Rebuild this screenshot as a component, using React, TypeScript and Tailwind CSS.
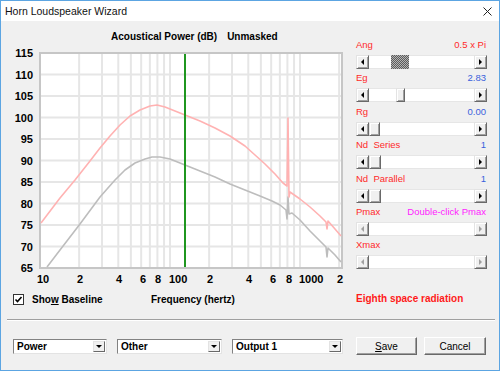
import React from "react";

const X = (f: number) => 40 + 130 * Math.log10(f / 10);
const Y = (db: number) => 53 + (115 - db) * 4.3;

const V_GRID = [20, 30, 40, 50, 60, 70, 80, 90, 100, 200, 300, 400, 500, 600, 700, 800, 900, 1000, 2000];
const H_GRID = [70, 75, 80, 85, 90, 95, 100, 105, 110];
const Y_LABELS = [115, 110, 105, 100, 95, 90, 85, 80, 75, 70, 65];

const X_LABELS = [
  { t: "10", x: 37, anchor: "start" },
  { t: "2", x: 80, anchor: "middle" },
  { t: "4", x: 119, anchor: "middle" },
  { t: "6", x: 143, anchor: "middle" },
  { t: "8", x: 158, anchor: "middle" },
  { t: "100", x: 169, anchor: "start" },
  { t: "2", x: 210, anchor: "middle" },
  { t: "4", x: 249, anchor: "middle" },
  { t: "6", x: 273, anchor: "middle" },
  { t: "8", x: 289, anchor: "middle" },
  { t: "1000", x: 299, anchor: "start" },
  { t: "2", x: 340, anchor: "middle" },
];

const PINK =
  "41,223 60,198 75,180 90,161 100,148 110,136 120,125 130,116 140,110 150,106 157,105 165,107 175,111 185,115 200,121 215,128 230,136 245,146 255,155 265,164 275,174 283,183 287,186 288,118 289,197 290,192 300,199 310,207 320,216 326,222 327,229 328,221 335,229 341,236";
const GRAY =
  "47,267 60,250 80,224 100,197 115,180 125,170 135,163 145,159 152,157 160,157 170,159 185,165 200,171 215,177 230,184 245,190 260,196 272,201 280,205 286,210 287,219 288,197 289,214 292,213 300,220 310,231 320,241 326,247 327,257 328,248 335,255 341,262";

const SLIDERS = [
  { label: "Ang", value: "0.5 x Pi", valueColor: "text-[#ff2a2a]", thumb: { left: 22, width: 18, dark: true } },
  { label: "Eg", value: "2.83", valueColor: "text-[#3a5fdc]", thumb: { left: 27, width: 9 } },
  { label: "Rg", value: "0.00", valueColor: "text-[#3a5fdc]", thumb: { left: 0, width: 11 } },
  { label: "Nd  Series", value: "1", valueColor: "text-[#3a5fdc]", thumb: { left: 0, width: 12 } },
  { label: "Nd  Parallel", value: "1", valueColor: "text-[#3a5fdc]", thumb: { left: 0, width: 12 } },
  { label: "Pmax", value: "Double-click Pmax", valueColor: "text-[#ff22ff]", thumb: null },
  { label: "Xmax", value: "", valueColor: "", thumb: null },
];

function ArrowBtn({ dir, disabled }: { dir: "left" | "right"; disabled?: boolean }) {
  return (
    <div className="w-[13px] h-full flex items-center justify-center bg-[#f0f0f0] border border-t-[#e3e3e3] border-l-[#e3e3e3] border-r-[#696969] border-b-[#696969] shadow-[inset_1px_1px_0_#fff,inset_-1px_-1px_0_#a0a0a0]">
      {dir === "left" ? (
        <div className={`w-0 h-0 border-y-[3px] border-y-transparent border-r-[3px] ${disabled ? "border-r-[#a0a0a0]" : "border-r-black"}`} />
      ) : (
        <div className={`w-0 h-0 border-y-[3px] border-y-transparent border-l-[3px] ${disabled ? "border-l-[#a0a0a0]" : "border-l-black"}`} />
      )}
    </div>
  );
}

function ScrollBar({ thumb }: { thumb: { left: number; width: number; dark?: boolean } | null }) {
  const disabled = !thumb;
  return (
    <div className="flex h-[14px] w-[131px] mt-[4px]">
      <ArrowBtn dir="left" disabled={disabled} />
      <div className="relative flex-1 bg-white border-y border-[#e6e6e6]">
        {thumb &&
          (thumb.dark ? (
            <div
              className="absolute -top-px -bottom-px bg-[image:repeating-conic-gradient(#5c5c5c_0_25%,#b4b4b4_0_50%)] bg-[length:2px_2px]"
              style={{ left: thumb.left, width: thumb.width }}
            />
          ) : (
            <div
              className="absolute -top-px -bottom-px bg-[#f0f0f0] border border-t-[#e3e3e3] border-l-[#e3e3e3] border-r-[#696969] border-b-[#696969] shadow-[inset_1px_1px_0_#fff,inset_-1px_-1px_0_#a0a0a0]"
              style={{ left: thumb.left, width: thumb.width }}
            />
          ))}
      </div>
      <ArrowBtn dir="right" disabled={disabled} />
    </div>
  );
}

function Combo({ className, text }: { className: string; text: string }) {
  return (
    <div className={`flex h-[15px] bg-white border border-t-[#828282] border-l-[#828282] border-r-[#e3e3e3] border-b-[#e3e3e3] ${className}`}>
      <div className="flex-1 pl-[3px] text-[10px] font-bold leading-[13px] text-black">{text}</div>
      <div className="w-[12px] m-px flex items-center justify-center bg-[#f0f0f0] border border-t-[#e3e3e3] border-l-[#e3e3e3] border-r-[#696969] border-b-[#696969]">
        <div className="w-0 h-0 border-x-[3px] border-x-transparent border-t-[3px] border-t-black" />
      </div>
    </div>
  );
}

function Chart() {
  return (
    <svg width={352} height={247} className="block">
      <g transform="translate(-1,-43)">
        <rect x={40} y={53} width={302} height={215} fill="#fff" />
        {V_GRID.map(f => (
          <line key={f} x1={X(f)} x2={X(f)} y1={54} y2={267} stroke="#e6e6e6" strokeWidth={2} />
        ))}
        {H_GRID.map(d => (
          <line key={d} x1={41} x2={341} y1={Y(d)} y2={Y(d)} stroke="#e6e6e6" strokeWidth={2} />
        ))}
        <rect x={40} y={53} width={302} height={215} fill="none" stroke="#c6c6c6" strokeWidth={2} />
        <polyline points={GRAY} fill="none" stroke="#bdbdbd" strokeWidth={1.6} strokeLinejoin="round" />
        <polyline points={PINK} fill="none" stroke="#ffb2b2" strokeWidth={1.6} strokeLinejoin="round" />
        <line x1={185} x2={185} y1={54} y2={267} stroke="#1f961f" strokeWidth={2} />
        {Y_LABELS.map(d => (
          <text key={d} x={33} y={Y(d) + 4} textAnchor="end" fontSize={11} fontWeight="bold" fill="#000">
            {d}
          </text>
        ))}
        {X_LABELS.map((l, i) => (
          <text key={i} x={l.x} y={283} textAnchor={l.anchor as "start" | "middle"} fontSize={11} fontWeight="bold" fill="#000">
            {l.t}
          </text>
        ))}
      </g>
    </svg>
  );
}

export default function App() {
  return (
    <div className="w-[500px] h-[371px] bg-[#f0f0f0] border border-[#5ca5e2] flex flex-col overflow-hidden font-['Liberation_Sans',Arial,sans-serif] text-black">
      {/* title bar */}
      <div className="h-[20px] bg-white flex items-center justify-between pl-[4px] pr-[7px]">
        <span className="text-[10.5px] leading-none text-[#111]">Horn Loudspeaker Wizard</span>
        <svg width={9} height={9} className="block">
          <path d="M0.5 0.5 L8.5 8.5 M8.5 0.5 L0.5 8.5" stroke="#222" strokeWidth={1} />
        </svg>
      </div>

      {/* main area */}
      <div className="flex h-[289px]">
        <div className="w-[352px] flex flex-col">
          <div className="mt-[10px] h-[12px] pl-[110px] flex text-[10px] font-bold leading-[12px]">
            <span>Acoustical Power (dB)</span>
            <span className="ml-[10px]">Unmasked</span>
          </div>
          <Chart />
          <div className="mt-[3px] h-[12px] pl-[12px] flex items-center text-[10px] font-bold">
            <div className="w-[11px] h-[11px] bg-white border border-[#333] flex items-center justify-center">
              <svg width={9} height={9} className="block">
                <path d="M1.5 4.5 L3.5 6.5 L7.5 2" fill="none" stroke="#000" strokeWidth={1.6} />
              </svg>
            </div>
            <span className="ml-[8px] w-[119px]">
              Sho<u>w</u> Baseline
            </span>
            <span>Frequency (hertz)</span>
          </div>
        </div>

        <div className="ml-[3px] w-[131px] pt-[18px] flex flex-col">
          <div className="flex flex-col gap-[3.4px]">
            {SLIDERS.map(s => (
              <div key={s.label} className="flex flex-col">
                <div className="h-[12px] flex justify-between items-center text-[9.5px] leading-[12px] whitespace-pre">
                  <span className="text-[#ff2a2a]">{s.label}</span>
                  <span className={`${s.valueColor} pr-px`}>{s.value}</span>
                </div>
                <ScrollBar thumb={s.thumb} />
              </div>
            ))}
          </div>
          <div className="mt-[24px] h-[12px] text-[10px] font-bold leading-[12px] text-[#ff1a1a]">
            Eighth space radiation
          </div>
        </div>
      </div>

      {/* separator */}
      <div className="mt-[9px] ml-[6px] mr-[4px] h-0 border-t border-t-[#a0a0a0] border-b border-b-white" />

      {/* bottom row */}
      <div className="mt-[16px] h-[18px] pl-[12px] flex items-center">
        <Combo className="w-[94px]" text="Power" />
        <Combo className="w-[105px] ml-[10px]" text="Other" />
        <Combo className="w-[111px] ml-[10px]" text="Output 1" />
        <button className="ml-[13px] w-[61px] h-[18px] bg-[#f0f0f0] text-[10px] border border-t-white border-l-white border-r-[#696969] border-b-[#696969] shadow-[inset_-1px_-1px_0_#a0a0a0]">
          <u>S</u>ave
        </button>
        <button className="ml-[7px] w-[62px] h-[18px] bg-[#f0f0f0] text-[10px] border border-t-white border-l-white border-r-[#696969] border-b-[#696969] shadow-[inset_-1px_-1px_0_#a0a0a0]">
          Cancel
        </button>
      </div>
    </div>
  );
}
